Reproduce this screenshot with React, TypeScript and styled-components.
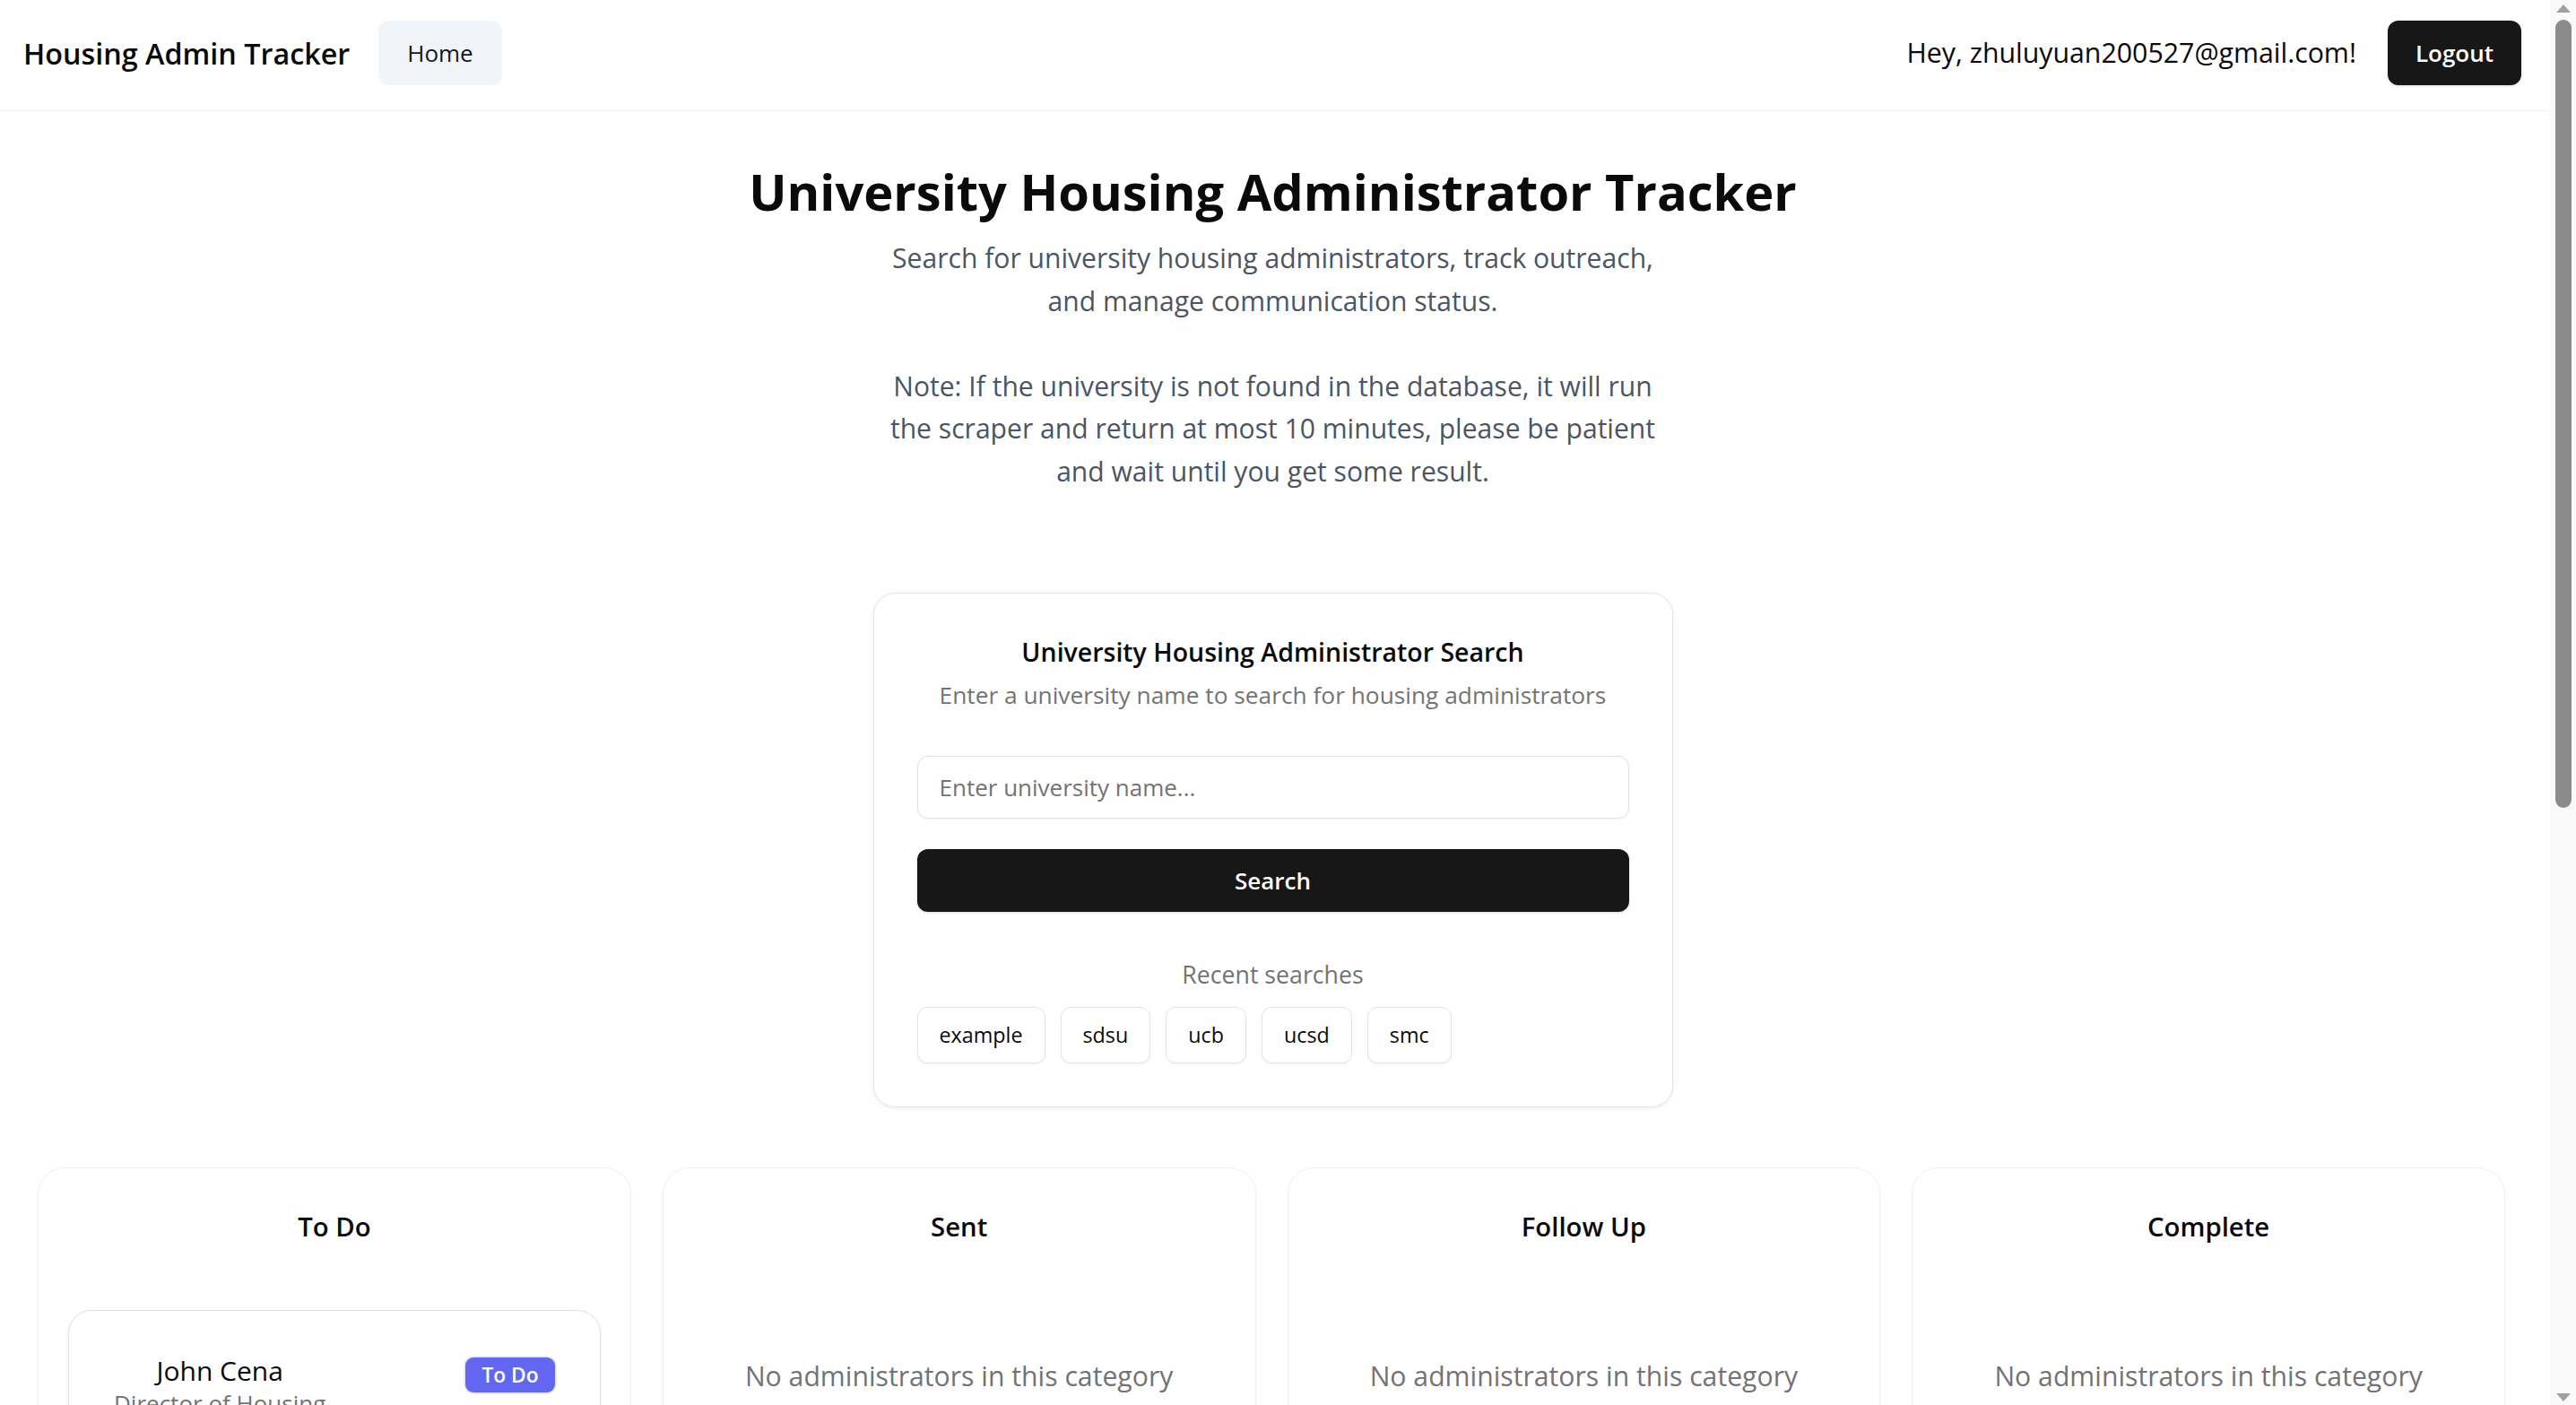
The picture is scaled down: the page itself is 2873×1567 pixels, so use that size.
import React from "react";
import styled, { createGlobalStyle } from "styled-components";

const FONT = `"Open Sans", "Noto Sans", "Liberation Sans", sans-serif`;

const GlobalStyle = createGlobalStyle`
  html, body {
    margin: 0;
    padding: 0;
    height: 100%;
    overflow: hidden;
    background: #ffffff;
  }
  body {
    font-family: ${FONT};
    color: #0a0a0a;
  }
  #root { height: 100%; }
  *, *::before, *::after { box-sizing: border-box; }
`;

const Shell = styled.div`
  display: flex;
  width: 100vw;
  height: 100vh;
  overflow: hidden;
`;

const Page = styled.div`
  flex: 1;
  min-width: 0;
  overflow: hidden;
  display: flex;
  flex-direction: column;
`;

/* ---------- header ---------- */

const Header = styled.header`
  flex-shrink: 0;
  height: 124px;
  display: flex;
  align-items: center;
  justify-content: space-between;
  padding: 0 32px 6px 26px;
  border-bottom: 1px solid #f0f0f0;
`;

const NavGroup = styled.div<{ $gap: number }>`
  display: flex;
  align-items: center;
  gap: ${(p) => p.$gap}px;
`;

const Brand = styled.div`
  font-size: 32.3px;
  font-weight: 600;
  color: #0a0a0a;
  white-space: nowrap;
`;

const NavButton = styled.button<{ $dark?: boolean }>`
  height: 72px;
  padding: 0 ${(p) => (p.$dark ? 31 : 32)}px;
  border: none;
  border-radius: 12px;
  font-family: ${FONT};
  font-size: 26px;
  font-weight: ${(p) => (p.$dark ? 600 : 500)};
  background: ${(p) => (p.$dark ? "#171717" : "#f1f5f9")};
  color: ${(p) => (p.$dark ? "#ffffff" : "#0f172a")};
  box-shadow: ${(p) => (p.$dark ? "0 1px 3px rgba(0,0,0,0.15)" : "none")};
  cursor: pointer;
`;

const Greeting = styled.span`
  font-size: 30.3px;
  color: #0a0a0a;
  white-space: nowrap;
`;

/* ---------- hero ---------- */

const Main = styled.main`
  padding-top: 54px;
  display: flex;
  flex-direction: column;
  align-items: stretch;
`;

const Hero = styled.section`
  display: flex;
  flex-direction: column;
  align-items: center;
  text-align: center;
  padding-right: 5px;
`;

const Title = styled.h1`
  margin: 0;
  font-size: 56px;
  line-height: 70px;
  font-weight: 700;
  color: #0a0a0a;
  white-space: nowrap;
`;

const Lead = styled.p<{ $spaced?: boolean }>`
  margin: ${(p) => (p.$spaced ? "47.6px" : "16px")} 0 0;
  font-size: 30.1px;
  line-height: 47.6px;
  color: #4b5563;
  white-space: nowrap;
`;

/* ---------- search card ---------- */

const SearchCard = styled.section`
  align-self: center;
  width: 892px;
  margin: 111px 5px 0 0;
  padding: 41px 48px 48px;
  border: 1px solid #e5e5e5;
  border-radius: 24px;
  background: #ffffff;
  box-shadow: 0 2px 5px rgba(0, 0, 0, 0.06);
  display: flex;
  flex-direction: column;
  align-items: stretch;
`;

const CardTitle = styled.h2`
  margin: 0;
  text-align: center;
  font-size: 28.5px;
  line-height: 48px;
  font-weight: 600;
  color: #0a0a0a;
`;

const CardDescription = styled.p`
  margin: 4px 0 0;
  text-align: center;
  font-size: 26.3px;
  line-height: 40px;
  color: #737373;
`;

const SearchInput = styled.input`
  margin-top: 48px;
  height: 70px;
  width: 100%;
  padding: 0 24px;
  border: 1px solid #e2e2e2;
  border-radius: 12px;
  font-family: ${FONT};
  font-size: 26px;
  color: #0a0a0a;
  background: #ffffff;
  box-shadow: 0 1px 2px rgba(0, 0, 0, 0.05);
  outline: none;
  &::placeholder {
    color: #737373;
  }
`;

const SearchButton = styled.button`
  margin-top: 34px;
  height: 70px;
  width: 100%;
  border: none;
  border-radius: 12px;
  background: #171717;
  color: #ffffff;
  font-family: ${FONT};
  font-size: 26px;
  font-weight: 600;
  box-shadow: 0 1px 3px rgba(0, 0, 0, 0.15);
  cursor: pointer;
`;

const RecentLabel = styled.div`
  margin-top: 49px;
  text-align: center;
  font-size: 26.7px;
  line-height: 42px;
  font-weight: 500;
  color: #737373;
`;

const ChipRow = styled.div`
  margin-top: 15px;
  display: flex;
  flex-wrap: wrap;
  gap: 17px;
`;

const Chip = styled.button`
  height: 63px;
  padding: 0 24px;
  border: 1px solid #e5e5e5;
  border-radius: 11px;
  background: #ffffff;
  font-family: ${FONT};
  font-size: 23.3px;
  font-weight: 500;
  color: #0a0a0a;
  box-shadow: 0 1px 2px rgba(0, 0, 0, 0.05);
  cursor: pointer;
`;

/* ---------- board ---------- */

const Board = styled.section`
  margin-top: 67px;
  padding: 0 50px 0 42px;
  display: grid;
  grid-template-columns: repeat(4, 1fr);
  gap: 35px;
`;

const Column = styled.div`
  min-height: 700px;
  border: 1px solid #f0f0f0;
  border-radius: 30px;
  background: #ffffff;
  box-shadow: 0 1px 2px rgba(0, 0, 0, 0.03);
  display: flex;
  flex-direction: column;
`;

const ColumnTitle = styled.h3`
  margin: 0;
  padding-top: 41px;
  text-align: center;
  font-size: 29.3px;
  line-height: 49px;
  font-weight: 600;
  color: #0a0a0a;
`;

const ColumnBody = styled.div`
  padding: 68px 33px 40px;
  display: flex;
  flex-direction: column;
  gap: 20px;
`;

const EmptyText = styled.p`
  margin: 50px 0 0;
  text-align: center;
  font-size: 30.2px;
  line-height: 48px;
  color: #737373;
`;

const AdminCard = styled.article`
  padding: 49px 50px 48px;
  border: 1px solid #e2e2e2;
  border-radius: 26px;
  background: #ffffff;
  box-shadow: 0 1px 3px rgba(0, 0, 0, 0.08);
  display: flex;
  align-items: flex-start;
  justify-content: space-between;
`;

const AdminInfo = styled.div`
  display: flex;
  flex-direction: column;
  align-items: center;
`;

const AdminName = styled.div`
  font-size: 30px;
  line-height: 36px;
  font-weight: 500;
  color: #0a0a0a;
`;

const AdminRole = styled.div`
  font-size: 26px;
  line-height: 36px;
  color: #737373;
`;

const StatusBadge = styled.span`
  margin-top: 3px;
  height: 39px;
  padding: 0 18px;
  display: inline-flex;
  align-items: center;
  border-radius: 9px;
  background: #6366f1;
  color: #ffffff;
  font-size: 22.8px;
  font-weight: 600;
  box-shadow: 0 0 0 1.5px #e4e4ea;
`;

/* ---------- scrollbar ---------- */

const ScrollTrack = styled.div`
  flex: 0 0 29px;
  height: 100vh;
  background: #f9f9f9;
  display: flex;
  flex-direction: column;
  align-items: center;
  padding: 5px 0 4px 1px;
`;

const ScrollThumb = styled.div`
  margin-top: 8px;
  width: 18px;
  height: 879px;
  border-radius: 9px;
  background: #8b8b8b;
`;

const ScrollSpacer = styled.div`
  flex: 1;
`;

const Arrow = ({ down }: { down?: boolean }) => (
  <svg width="16" height="9" viewBox="0 0 16 9">
    <polygon
      points={down ? "0,0 16,0 8,9" : "8,0 16,9 0,9"}
      fill="#a0a0a0"
    />
  </svg>
);

/* ---------- data ---------- */

const recent = ["example", "sdsu", "ucb", "ucsd", "smc"];
const columns = ["To Do", "Sent", "Follow Up", "Complete"];

export default function App() {
  return (
    <>
      <GlobalStyle />
      <Shell>
        <Page>
          <Header>
            <NavGroup $gap={32}>
              <Brand>Housing Admin Tracker</Brand>
              <NavButton>Home</NavButton>
            </NavGroup>
            <NavGroup $gap={35}>
              <Greeting>Hey, zhuluyuan200527@gmail.com!</Greeting>
              <NavButton $dark>Logout</NavButton>
            </NavGroup>
          </Header>

          <Main>
            <Hero>
              <Title>University Housing Administrator Tracker</Title>
              <Lead>
                Search for university housing administrators, track outreach,
                <br />
                and manage communication status.
              </Lead>
              <Lead $spaced>
                Note: If the university is not found in the database, it will run
                <br />
                the scraper and return at most 10 minutes, please be patient
                <br />
                and wait until you get some result.
              </Lead>
            </Hero>

            <SearchCard>
              <CardTitle>University Housing Administrator Search</CardTitle>
              <CardDescription>
                Enter a university name to search for housing administrators
              </CardDescription>
              <SearchInput placeholder="Enter university name..." />
              <SearchButton>Search</SearchButton>
              <RecentLabel>Recent searches</RecentLabel>
              <ChipRow>
                {recent.map((r) => (
                  <Chip key={r}>{r}</Chip>
                ))}
              </ChipRow>
            </SearchCard>

            <Board>
              {columns.map((c) => (
                <Column key={c}>
                  <ColumnTitle>{c}</ColumnTitle>
                  <ColumnBody>
                    {c === "To Do" ? (
                      <AdminCard>
                        <AdminInfo>
                          <AdminName>John Cena</AdminName>
                          <AdminRole>Director of Housing</AdminRole>
                        </AdminInfo>
                        <StatusBadge>To Do</StatusBadge>
                      </AdminCard>
                    ) : (
                      <EmptyText>No administrators in this category</EmptyText>
                    )}
                  </ColumnBody>
                </Column>
              ))}
            </Board>
          </Main>
        </Page>
        <ScrollTrack>
          <Arrow />
          <ScrollThumb />
          <ScrollSpacer />
          <Arrow down />
        </ScrollTrack>
      </Shell>
    </>
  );
}
